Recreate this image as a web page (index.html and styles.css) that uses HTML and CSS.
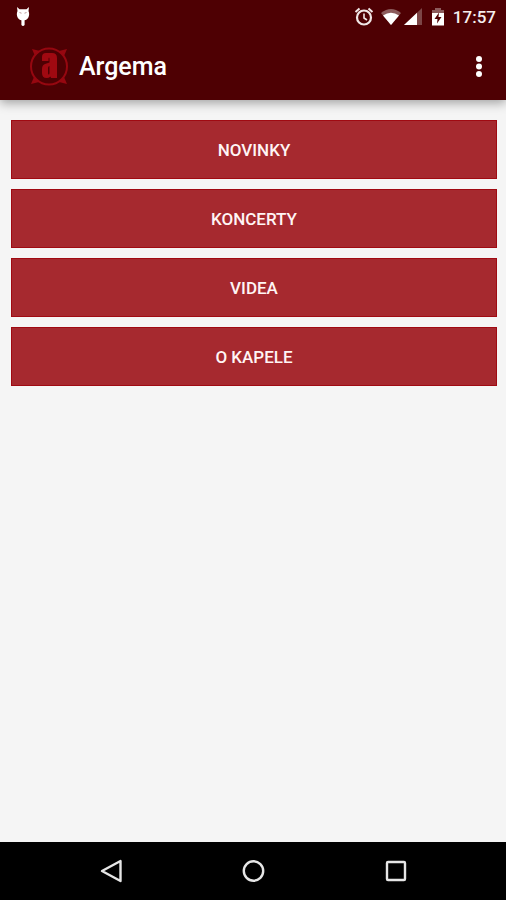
FILE: index.html
```html
<!DOCTYPE html>
<html lang="cs">
<head>
<meta charset="utf-8">
<meta name="viewport" content="width=device-width, initial-scale=1">
<title>Argema</title>
<link rel="stylesheet" href="styles.css">
</head>
<body>
<div class="screen">
  <header class="top">
    <div class="status">
      <svg class="debug" width="16" height="22" viewBox="0 0 16 22" aria-hidden="true">
        <path d="M2 1l2.500 2.200h7L14 1l-.5 4c1 2 .9 5-.4 7-.8 1.300-2 2-3.500 2.200V19q-1.600 2-3.200 0v-4.800C4.900 14 3.700 13.300 2.900 12 1.600 10 1.500 7 2.500 5z" fill="#fff"/>
        <path d="M4.500 6.500l2 .7M11.500 6.500l-2 .7" stroke="#b99" stroke-width="1"/>
      </svg>
      <div class="indicators">
        <svg width="20" height="20" viewBox="0 0 20 20" fill="none" stroke="#f0e6e6" aria-hidden="true">
          <circle cx="10" cy="10.500" r="7" stroke-width="2.200"/>
          <path d="M1.500 5l4-3.500M18.500 5l-4-3.500" stroke-width="2"/>
          <path d="M10 6.500V11l3 2" stroke-width="1.600"/>
        </svg>
        <svg class="wifi" width="22" height="18" viewBox="0 0 22 18" aria-hidden="true">
          <path d="M11 17L1 5Q11-3 21 5z" fill="#8c5b5c"/>
          <path d="M11 17L3 7.500Q11 2 19 7.500z" fill="#fff"/>
        </svg>
        <svg class="signal" width="18" height="18" viewBox="0 0 18 18" aria-hidden="true">
          <path d="M0 17L18 0v17z" fill="#7c4546"/>
          <path d="M0 17L13 4.700V17z" fill="#fff"/>
        </svg>
        <svg class="battery" width="14" height="20" viewBox="0 0 14 20" aria-hidden="true">
          <path d="M1 3h3V1h6v2h3v4H1z" fill="#8c5b5c"/>
          <path d="M1 6h12v12.500H1z" fill="#fff"/>
          <path d="M8 5.500L3.500 12h3L6 16.500l4.500-6.500h-3z" fill="#4e0003"/>
        </svg>
        <time class="clock">17:57</time>
      </div>
    </div>
    <div class="appbar">
      <svg class="logo" width="40" height="40" viewBox="0 0 40 40" aria-hidden="true">
        <circle cx="20" cy="19.500" r="18" fill="none" stroke="#960710" stroke-width="2"/>
        <path d="M3 2l8 2-5 5zM38 2l-8 2 5 5zM2 37l8-2-5-5zM38 37l-8-2 5-5z" fill="#960710"/>
        <path fill-rule="evenodd" d="M13 14v-4q0-4 4-4h6q5 0 5 5v20h-6l-.5-1.500Q20 31 17.500 31q-4.500 0-4.500-5v-4q0-4 3-5l4.500-1.500V12q0-1.500-.5-1.500T19.500 12v2zM20.500 19l-1 .5q-.5.500-.5 2V26q0 1.500.7 1.500t.8-1.500z" fill="#a00911"/>
      </svg>
      <h1 class="title">Argema</h1>
      <button class="more" type="button" aria-label="Další možnosti">
        <svg width="8" height="22" viewBox="0 0 8 22" fill="#fff" aria-hidden="true">
          <circle cx="4" cy="3" r="3"/><circle cx="4" cy="10.500" r="3"/><circle cx="4" cy="18" r="3"/>
        </svg>
      </button>
    </div>
  </header>
  <main class="menu">
    <button class="item" type="button">NOVINKY</button>
    <button class="item" type="button">KONCERTY</button>
    <button class="item" type="button">VIDEA</button>
    <button class="item" type="button">O KAPELE</button>
  </main>
  <nav class="navbar">
    <button type="button" aria-label="Zpět">
      <svg width="24" height="24" viewBox="0 0 24 24" aria-hidden="true"><path d="M21.500 2v20L3 12z"/></svg>
    </button>
    <button type="button" aria-label="Domů">
      <svg width="24" height="24" viewBox="0 0 24 24" aria-hidden="true"><circle cx="12.500" cy="12" r="9.700"/></svg>
    </button>
    <button type="button" aria-label="Přehled">
      <svg width="24" height="24" viewBox="0 0 24 24" aria-hidden="true"><rect x="4" y="3" width="18" height="18" rx="1"/></svg>
    </button>
  </nav>
</div>
</body>
</html>
```
FILE: styles.css
```css
* {
  box-sizing: border-box;
}

body {
  margin: 0;
  font-family: Roboto, "Liberation Sans", sans-serif;
  background: #f5f5f5;
}

button {
  padding: 0;
  border: 0;
  background: none;
  font: inherit;
  color: inherit;
}

svg {
  display: block;
}

.screen {
  display: flex;
  flex-direction: column;
  min-height: 100vh;
}

.top {
  background: #4e0003;
  color: #fff;
  box-shadow: 0 3px 10px rgba(0, 0, 0, 0.35);
}

.status {
  display: flex;
  align-items: center;
  justify-content: space-between;
  height: 33px;
  padding: 0 10px 0 15px;
}

.indicators {
  display: flex;
  align-items: center;
}

.wifi {
  margin-left: 6px;
}

.signal {
  margin-left: 2px;
}

.battery {
  margin-left: 9px;
}

.clock {
  margin-left: 8px;
  font-size: 17px;
  font-weight: 500;
  line-height: 20px;
  color: #f5eeee;
}

.appbar {
  display: flex;
  align-items: center;
  height: 67px;
  padding: 0 14px 0 29px;
}

.title {
  flex: 1;
  margin: 0 0 0 10px;
  font-size: 25px;
  font-weight: 500;
  line-height: 32px;
}

.more {
  display: grid;
  place-items: center;
  width: 26px;
  height: 48px;
}

.menu {
  flex: 1;
  display: flex;
  flex-direction: column;
  gap: 10px;
  padding: 20px 9px 20px 11px;
}

.item {
  height: 59px;
  border: 1px solid #a00a12;
  background: #a6292f;
  color: #fff5f5;
  font-size: 17px;
  font-weight: 500;
  line-height: 24px;
}

.navbar {
  display: grid;
  grid-template-columns: repeat(3, 1fr);
  height: 58px;
  padding: 0 40px;
  background: #000;
}

.navbar button {
  display: grid;
  place-items: center;
}

.navbar svg {
  fill: none;
  stroke: #e6e6e6;
  stroke-width: 2.4;
  stroke-linejoin: round;
}
```
